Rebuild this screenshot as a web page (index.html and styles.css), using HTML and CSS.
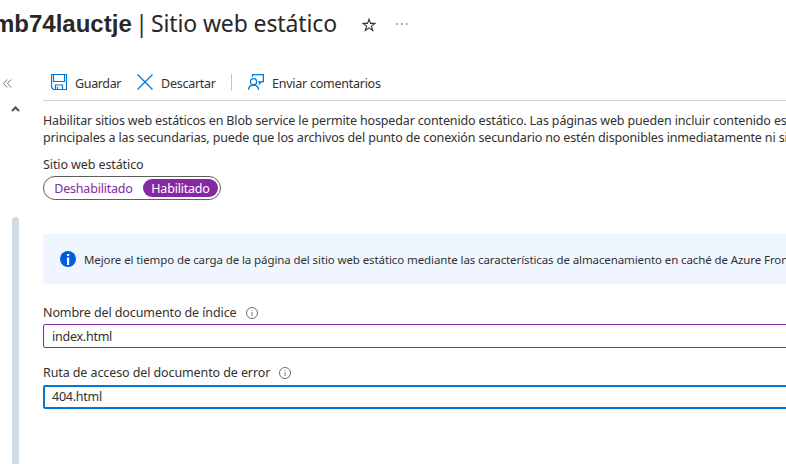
FILE: index.html
```
<!DOCTYPE html>
<html lang="es">
<head>
<meta charset="utf-8">
<title>Sitio web estático</title>
<link rel="stylesheet" href="styles.css">
</head>
<body>
<header class="header">
  <h1 class="title"><span class="account">mb74lauctje</span><span class="bar">|</span><span class="page">Sitio web estático</span></h1>
  <svg class="star" width="14" height="14" viewBox="0 0 14 14"><path d="M7 1.200l1.500 4.200h4.400L9.400 8.100l1.300 4.400L7 9.900l-3.700 2.600 1.300-4.400-3.500-2.700h4.400z" fill="none" stroke="#323130" stroke-width="1.100"/></svg>
  <svg class="more" width="12" height="4" viewBox="0 0 12 4"><path d="M0 1.500h1.500v1H0zM5 1.500h1.500v1H5zM10 1.500h1.500v1H10z" fill="#323130"/></svg>
</header>
<div class="body">
  <aside class="rail">
    <svg class="collapse" width="9" height="9" viewBox="0 0 9 9"><path d="M4 .5l-3.500 4 3.500 4M8 .5l-3.500 4 3.500 4" fill="none" stroke="#706e6c" stroke-width=".9"/></svg>
    <svg class="up" width="9" height="6" viewBox="0 0 9 6"><path d="M1 5l3.500-3.500L8 5" fill="none" stroke="#505050" stroke-width="2"/></svg>
    <div class="thumb"></div>
  </aside>
  <main class="main">
    <nav class="toolbar">
      <button class="cmd save"><svg width="16" height="16" viewBox="0 0 16 16"><path d="M.5.5h15v15h-13l-2-2zM2.500.5v7h11v-7M4.500 15.500v-4.500h7v4.500M6.500 13v2.500" fill="none" stroke="#0078d4" stroke-width="1.200"/></svg><span>Guardar</span></button>
      <button class="cmd discard"><svg width="16" height="16" viewBox="0 0 16 16"><path d="M.5.5l15 15M15.500.5l-15 15" fill="none" stroke="#0078d4" stroke-width="1.300"/></svg><span>Descartar</span></button>
      <span class="divider"></span>
      <button class="cmd feedback"><svg width="16" height="16" viewBox="0 0 16 16"><path d="M4.500 3V.6h10.900v7h-2L11.500 9.800V7.600h-1.300M.5 15.800c.3-6.300 9.700-6.300 10 0" fill="none" stroke="#0078d4" stroke-width="1.300"/><circle cx="5.500" cy="7.800" r="3.100" fill="none" stroke="#0078d4" stroke-width="1.200"/></svg><span>Enviar comentarios</span></button>
    </nav>
    <p class="intro"><span>Habilitar sitios web estáticos en Blob service le permite hospedar contenido estático. Las páginas web pueden incluir contenido es</span><span>principales a las secundarias, puede que los archivos del punto de conexión secundario no estén disponibles inmediatamente ni si</span></p>
    <div class="label">Sitio web estático</div>
    <div class="toggle"><span class="off">Deshabilitado</span><span class="on">Habilitado</span></div>
    <div class="banner"><svg width="16" height="16" viewBox="0 0 16 16"><circle cx="8" cy="8" r="8" fill="#015cda"/><path d="M7 6.500h2.200V14H7zM7 3h2.200v2H7z" fill="#fff"/></svg><span>Mejore el tiempo de carga de la página del sitio web estático mediante las características de almacenamiento en caché de Azure Fron</span></div>
    <label class="label field-label" for="idx"><span>Nombre del documento de índice</span><svg width="12" height="12" viewBox="0 0 12 12"><circle cx="6" cy="6" r="5.500" fill="none" stroke="#706e6c"/><path d="M5.500 5h1v4h-1zM5.500 3h1v1h-1z" fill="#807e7c"/></svg></label>
    <input id="idx" class="input index" value="index.html">
    <label class="label field-label second" for="err"><span>Ruta de acceso del documento de error</span><svg width="12" height="12" viewBox="0 0 12 12"><circle cx="6" cy="6" r="5.500" fill="none" stroke="#706e6c"/><path d="M5.500 5h1v4h-1zM5.500 3h1v1h-1z" fill="#807e7c"/></svg></label>
    <input id="err" class="input error" value="404.html">
  </main>
</div>
</body>
</html>
```
FILE: styles.css
```
* { box-sizing: border-box; }
body { margin: 0; height: 464px; overflow: hidden; background: #fff; color: #323130; font: 12.500px/17px "Noto Sans", sans-serif; }
svg { display: block; flex: none; }
.header { display: flex; height: 68px; align-items: flex-start; white-space: nowrap; }
.title { margin: 8px 0 0 -7px; width: 344px; font-size: 23px; line-height: 32px; font-weight: 400; color: #292827; display: flex; }
.account { font-family: "Liberation Sans", sans-serif; font-size: 24px; font-weight: 700; width: 139px; }
.bar { width: 19px; line-height: 30px; text-align: center; }
.page { line-height: 30px; letter-spacing: -.13px; }
.star { margin: 18px 0 0 25px; }
.more { margin: 22px 0 0 20px; }
.body { display: flex; height: 396px; }
.rail { width: 43px; flex: none; display: flex; flex-direction: column; }
.collapse { margin: 11px 0 0 3px; }
.up { margin: 18px 0 0 11px; }
.thumb { margin: 105px 0 0 12px; width: 7px; height: 260px; border-radius: 4px 4px 0 0; background: #d0dbe3; }
.main { flex: 1; min-width: 0; overflow: hidden; }
.toolbar { height: 33px; display: flex; align-items: center; border-bottom: 1px solid #d2d0ce; padding: 0 0 4px 8px; }
.cmd { display: flex; align-items: center; gap: 8px; border: 0; padding: 0; background: none; color: inherit; font: inherit; letter-spacing: -.25px; white-space: nowrap; }
.cmd span { padding-top: 2px; }
.save { width: 86px; }
.save span { letter-spacing: -.35px; }
.discard { width: 94px; }
.divider { width: 1px; height: 17px; background: #c8c6c4; margin-right: 16px; }
.intro { margin: 11px 0 0; letter-spacing: -.145px; white-space: nowrap; }
.intro span { display: block; }
.label { margin-top: 10px; letter-spacing: -.1px; white-space: nowrap; }
.toggle { display: flex; justify-content: space-between; width: 178px; height: 24px; margin-top: 3px; padding: 2px; border: 1px solid #605e5c; border-radius: 12px; line-height: 20px; letter-spacing: -.2px; white-space: nowrap; }
.off { width: 95px; text-align: center; color: #8627a3; }
.on { width: 75px; height: 18px; border-radius: 9px; text-align: center; color: #fff; background: #8627a3; }
.banner { display: flex; align-items: center; gap: 8px; height: 50px; margin-top: 34px; padding-left: 17px; border-radius: 2px 0 0 2px; background: #f0f6ff; font-size: 11.500px; letter-spacing: -.1px; white-space: nowrap; }
.field-label { display: flex; align-items: center; gap: 9px; margin-top: 20px; }
.input { display: block; width: 760px; height: 24px; margin-top: 3px; padding: 0 8px; border: 1px solid #8627a3; border-radius: 2px; color: inherit; font: inherit; letter-spacing: -.25px; outline: 0; }
.second { margin-top: 16px; }
.error { margin-top: 4px; padding: 0 7px 2px; border: 2px solid #0078d4; }
```
